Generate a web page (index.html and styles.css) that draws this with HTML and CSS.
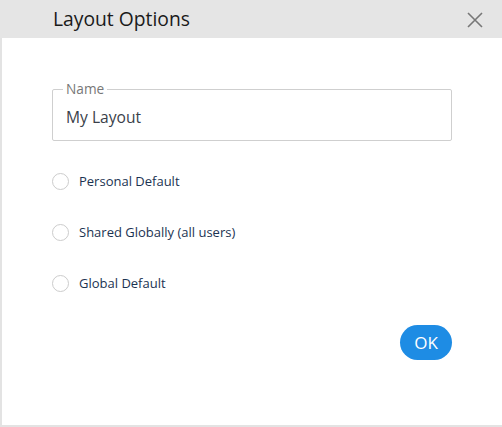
FILE: index.html
```html
<!DOCTYPE html>
<html>
<head>
<meta charset="utf-8">
<link rel="stylesheet" href="styles.css">
</head>
<body>
<div class="dialog">
  <div class="header">
    <div class="title">Layout Options</div>
    <button class="close" aria-label="Close">
      <svg width="16" height="16" viewBox="0 0 16 16"><path d="M1 1 L15 15 M15 1 L1 15" stroke="#777" stroke-width="1.6" fill="none"/></svg>
    </button>
  </div>
  <div class="body">
    <fieldset class="field">
      <legend>Name</legend>
      <div class="value">My Layout</div>
    </fieldset>
    <div class="options">
      <label class="opt"><span class="radio"></span><span>Personal Default</span></label>
      <label class="opt"><span class="radio"></span><span>Shared Globally (all users)</span></label>
      <label class="opt"><span class="radio"></span><span>Global Default</span></label>
    </div>
    <div class="actions">
      <button class="ok">OK</button>
    </div>
  </div>
</div>
</body>
</html>
```
FILE: styles.css
```css
html, body { margin: 0; padding: 0; overflow: hidden; }
body { font-family: "Open Sans", "Noto Sans", sans-serif; background: #fff; width: 502px; height: 427px; }
.dialog { width: 502px; height: 427px; display: flex; flex-direction: column; box-sizing: border-box; }
.header { height: 38px; background: #e5e5e5; display: flex; align-items: center; justify-content: space-between; padding: 0 19px 0 53px; flex: none; }
.title { font-size: 19.3px; color: #1a1a1a; line-height: 24px; margin-top: -1px; }
.close { border: 0; background: none; padding: 0; width: 16px; height: 16px; display: flex; margin-top: 1px; }
.body { flex: 1; border-left: 2px solid #e3e3e3; border-bottom: 2px solid #e3e3e3; padding: 43px 50px 0 50px; display: flex; flex-direction: column; }
.field { margin: 0; border: 1px solid #cfcfcf; border-radius: 2px; padding: 0 13px 0 13px; height: 60px; box-sizing: border-box; }
.field legend { font-size: 13.7px; color: #777; padding: 0 3px; margin-left: -3px; line-height: 16px; }
.value { font-size: 15.6px; color: #3a3f4a; line-height: 22px; margin-top: 9px; }
.options { display: flex; flex-direction: column; gap: 29px; margin-top: 29px; }
.opt { display: flex; align-items: center; gap: 10px; font-size: 13px; color: #1b3352; height: 22px; }
.radio { width: 17px; height: 17px; border: 1px solid #cccccc; border-radius: 50%; box-sizing: border-box; flex: none; }
.actions { display: flex; justify-content: flex-end; margin-top: 31px; }
.ok { border: 0; background: #1e8ce4; color: #fff; font-family: inherit; font-size: 17px; width: 52px; height: 35px; border-radius: 18px; padding: 0; }
```
